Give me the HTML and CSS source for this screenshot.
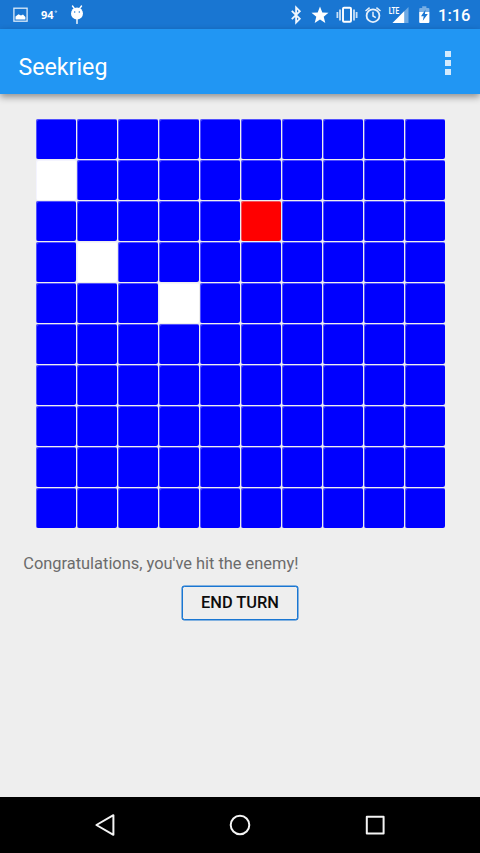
FILE: index.html
```html
<!DOCTYPE html>
<html lang="en">
<head>
<meta charset="utf-8">
<title>Seekrieg</title>
<link rel="stylesheet" href="styles.css">
</head>
<body>
<div class="screen">
  <header class="status">
    <svg class="status-icons" width="100" height="29" viewBox="0 0 100 29">
      <rect x="13.9" y="8.2" width="13.2" height="13" fill="none" stroke="#dcebfa" stroke-width="1.3"/>
      <path d="M15.5 19.6v-3l3-2.4 2.5 1.4 2-1 2.4 2.4v2.6z" fill="#fff"/>
      <text class="temp" x="41" y="19">94</text>
      <circle cx="55.9" cy="11.6" r=".8" fill="none" stroke="#e6f0fb" stroke-width=".7"/>
      <path d="M72.5 6l2.2 3M81.5 6l-2.2 3M77 18v5.4" stroke="#fff" stroke-width="1.4" stroke-linecap="round"/>
      <circle cx="77" cy="13.6" r="6" fill="#fff"/>
      <circle cx="74.7" cy="11.9" r=".75" fill="#1976d2"/><circle cx="79.3" cy="11.9" r=".75" fill="#1976d2"/>
    </svg>
    <svg class="status-icons" width="145" height="29" viewBox="288 0 145 29">
      <path d="M291.8 10.8l8 8-3.7 3.7V7.5l3.7 3.7-8 8" fill="none" stroke="#f0f6fd" stroke-width="1.8"/>
      <path d="M320 6.6l2.3 5.8 6.2.4-4.8 4 1.6 6.1-5.3-3.4-5.3 3.4 1.6-6.1-4.8-4 6.2-.4z" fill="#fff"/>
      <rect x="343" y="7.8" width="8" height="14" rx="1" fill="none" stroke="#fff" stroke-width="1.9"/>
      <path d="M340 9.6v10.8M354 9.6v10.8M337.4 12v6M356.6 12v6" stroke="#c9e0f7" stroke-width="1.8"/>
      <circle cx="373" cy="15.7" r="6.4" fill="none" stroke="#e6f0fb" stroke-width="1.8"/>
      <path d="M373 11.8v4.2l2.8 1.7M365.5 11l4.1-3.4M380.5 11l-4.1-3.4" fill="none" stroke="#e6f0fb" stroke-width="1.5"/>
      <path d="M392.5 23L408.5 7v16z" fill="#6ea9e3"/>
      <path d="M392.5 23l11.7-11.7V23z" fill="#fff"/>
      <text class="lte" x="388.7" y="13.8" textLength="10.6" lengthAdjust="spacingAndGlyphs">LTE</text>
      <path d="M419.2 12V9q0-1 1-1h2V6.2h4.2V8h2q1 0 1 1v3z" fill="#78afe5"/>
      <path d="M419.2 12h10.2v10q0 1-1 1h-8.2q-1 0-1-1z" fill="#fff"/>
      <path d="M425.6 9.4l-4.6 6.8h2.7l-.9 4.6 5-6.8h-2.9z" fill="#1976d2"/>
    </svg>
    <span class="clock">1:16</span>
  </header>
  <div class="toolbar">
    <h1 class="title">Seekrieg</h1>
    <div class="overflow"><i></i><i></i><i></i></div>
  </div>
  <main class="content">
    <div class="board" id="board"></div>
    <p class="message">Congratulations, you've hit the enemy!</p>
    <button class="end-turn">END TURN</button>
  </main>
  <nav class="navbar">
    <svg width="480" height="55" viewBox="0 798 480 55" fill="none" stroke="#f4f4f4" stroke-width="2" stroke-linejoin="round">
      <path d="M113.4 815.2v19.6l-17-9.8z"/>
      <circle cx="240" cy="825" r="9.3"/>
      <rect x="366.8" y="816.7" width="16.8" height="16.8"/>
    </svg>
  </nav>
</div>
<script src="board.js"></script>
</body>
</html>
```
FILE: styles.css
```css
* { box-sizing: border-box; }
body { margin: 0; font-family: Roboto, "Liberation Sans", sans-serif; }
.screen {
  width: 480px;
  height: 853px;
  display: flex;
  flex-direction: column;
  background: #eee;
  overflow: hidden;
}
.status {
  height: 29px;
  flex: none;
  display: flex;
  align-items: center;
  background: #1976d2;
  color: #fff;
}
.status-icons { display: block; flex: none; }
.status-icons + .status-icons { margin-left: 188px; }
.temp { font: 700 11px "Open Sans", sans-serif; fill: #fff; }
.lte { font: 700 9.6px Roboto, sans-serif; fill: #fff; }
.clock {
  margin-left: 5px;
  padding-top: 2px;
  font-size: 16.5px;
  font-weight: 500;
  line-height: 20px;
  white-space: nowrap;
}
.toolbar {
  position: relative;
  height: 65px;
  flex: none;
  display: flex;
  align-items: center;
  justify-content: space-between;
  padding: 10px 29px 0 18.5px;
  background: #2196f3;
  box-shadow: 0 3px 7px rgba(0, 0, 0, .4);
}
.title {
  margin: 0;
  color: #fff;
  font-size: 23.2px;
  font-weight: 400;
  line-height: 30px;
}
.overflow {
  display: flex;
  flex-direction: column;
  gap: 3px;
  width: 6px;
  margin-bottom: 7px;
}
.overflow i { height: 6px; background: #d3eafd; }
.content {
  flex: 1;
  display: flex;
  flex-direction: column;
  padding-top: 25px;
}
.board {
  display: grid;
  grid-template-columns: repeat(10, 40px);
  grid-auto-rows: 40px;
  gap: 1px;
  margin-left: 36px;
}
.cell {
  border-radius: 2px;
  background: #00f;
  box-shadow: inset 1px 1px 0 rgba(225, 225, 255, .36);
}
.miss { background: #fff; }
.hit { background: #f00; }
.message {
  margin: 26px 0 0 23.3px;
  color: #6b6b6b;
  font-size: 16.4px;
  line-height: 20px;
  white-space: nowrap;
}
.end-turn {
  width: 116px;
  height: 34px;
  margin: 11.5px 0 0 182px;
  padding: 0;
  border: 1px solid #1976d2;
  border-radius: 2.5px;
  box-shadow: 0 0 0 .5px #1976d2;
  background: #eee;
  color: #0c0c0c;
  font: 500 16.4px Roboto, sans-serif;
  white-space: nowrap;
}
.navbar {
  height: 56px;
  flex: none;
  padding-top: 1px;
  background: #000;
}
.navbar svg { display: block; }
```
FILE: board.js
```js
const board = document.getElementById("board");
const shots = { 10: "miss", 25: "hit", 31: "miss", 43: "miss" };
for (let i = 0; i < 100; i++) {
  const cell = document.createElement("div");
  cell.className = shots[i] ? "cell " + shots[i] : "cell";
  board.appendChild(cell);
}
```
